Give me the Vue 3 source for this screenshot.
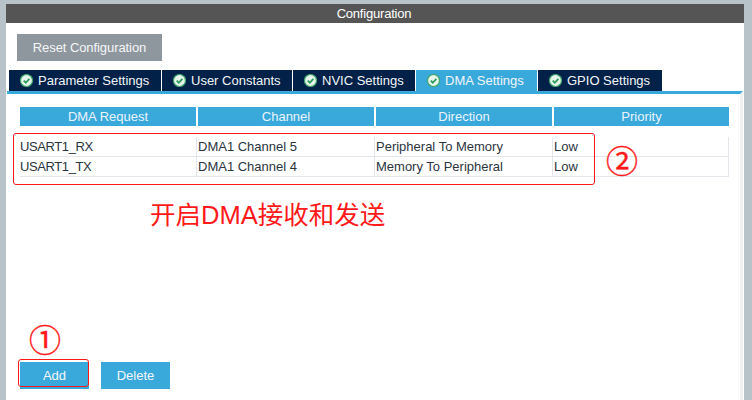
<script setup>
const tabs = [
  { name: 'Parameter Settings', w: 152 },
  { name: 'User Constants', w: 130 },
  { name: 'NVIC Settings', w: 122 },
  { name: 'DMA Settings', w: 121, active: true },
  { name: 'GPIO Settings', w: 124 }
]
const columns = ['DMA Request', 'Channel', 'Direction', 'Priority']
const rows = [
  ['USART1_RX', 'DMA1 Channel 5', 'Peripheral To Memory', 'Low'],
  ['USART1_TX', 'DMA1 Channel 4', 'Memory To Peripheral', 'Low']
]
</script>

<template>
  <div class="stage">
    <section class="panel">
      <header class="title">Configuration</header>
      <div class="toolbar">
        <button class="btn reset">Reset Configuration</button>
      </div>
      <nav class="tabs">
        <div
          v-for="t in tabs"
          :key="t.name"
          class="tab"
          :class="{ active: t.active }"
          :style="{ width: t.w + 'px' }"
        >
          <svg class="check" width="13" height="13" viewBox="0 0 13 13">
            <circle cx="6.5" cy="6.5" r="6" fill="#e8f5ec" stroke="#3fa66a" stroke-width="1.2" />
            <path d="M3.7 6.6 L5.8 8.7 L9.4 4.9" fill="none" stroke="#2f9e5f" stroke-width="1.8" />
          </svg>
          <span>{{ t.name }}</span>
        </div>
      </nav>
      <div class="body">
        <div class="thead">
          <div v-for="c in columns" :key="c" class="th">{{ c }}</div>
        </div>
        <div class="tbody">
          <div v-for="r in rows" :key="r[0]" class="tr">
            <div v-for="(v, i) in r" :key="i" class="td">{{ v }}</div>
          </div>
        </div>
        <div class="actions">
          <button class="btn blue">Add</button>
          <button class="btn blue">Delete</button>
        </div>
      </div>
    </section>

    <div class="mark box-table"></div>
    <div class="mark box-add"></div>
    <div class="note caption">开启DMA接收和发送</div>
    <div class="note num one">①</div>
    <div class="note num two">②</div>
  </div>
</template>

<style>
html, body { margin: 0; background: #b7c2c9; }
</style>

<style scoped>
.stage {
  position: relative;
  width: 752px;
  height: 400px;
  overflow: hidden;
  background: #b7c2c9;
  padding: 4px 8px 0 6px;
  box-sizing: border-box;
  font-family: "Liberation Sans", Arial, sans-serif;
}
.panel {
  height: 396px;
  background: #fff;
  display: flex;
  flex-direction: column;
}
.title {
  height: 19px;
  line-height: 19px;
  background: #545554;
  color: #fff;
  text-align: center;
  font-size: 13px;
  letter-spacing: -0.2px;
  padding-right: 2px;
}
.toolbar {
  padding: 11px 0 0 11px;
  height: 36px;
  box-sizing: content-box;
}
.btn {
  border: 0;
  padding: 0;
  margin: 0;
  color: #f4f6f8;
  font-family: inherit;
  font-size: 13px;
  display: block;
}
.reset {
  width: 145px;
  height: 27px;
  background: #8f979e;
  letter-spacing: -0.08px;
}
.tabs {
  display: flex;
  gap: 1px;
  padding-left: 3px;
  height: 21px;
}
.tab {
  box-sizing: border-box;
  background: #012148;
  color: #f2f5f8;
  font-size: 13px;
  display: flex;
  align-items: center;
  padding-left: 11px;
  gap: 5px;
  height: 21px;
}
.tab.active { background: #39a9db; }
.check { flex: none; }
.body {
  flex: 1;
  border-top: 3px solid #39a9db;
  margin-left: 1px;
  margin-right: 1px;
  padding: 13px 0 0 13px;
  position: relative;
  display: flex;
  flex-direction: column;
  border-right: 3px solid #f0f0f0;
}
.thead {
  display: grid;
  grid-template-columns: 176px 176px 176px 175px;
  column-gap: 2px;
  width: 709px;
}
.th {
  height: 19px;
  line-height: 19px;
  background: #39a9db;
  color: #eaf4fa;
  text-align: center;
  font-size: 13px;
}
.tbody {
  margin-top: 11px;
  width: 709px;
}
.tr {
  display: grid;
  grid-template-columns: 177px 178px 178px 176px;
  height: 20px;
  box-sizing: border-box;
  border-bottom: 1px solid #e3e6ea;
}
.td {
  font-size: 13px;
  line-height: 19px;
  color: #2c3540;
  padding-left: 1px;
  border-right: 1px solid #e3e6ea;
  box-sizing: border-box;
}
.td:first-child { padding-left: 0; letter-spacing: -0.4px; }
.actions {
  display: flex;
  gap: 12px;
  margin-top: 185px;
}
.blue {
  width: 69px;
  height: 27px;
  background: #39a9db;
}
.mark {
  position: absolute;
  box-sizing: border-box;
  border: 1px solid #ff1a1a;
  border-radius: 3px;
}
.box-table { left: 13px; top: 133px; width: 582px; height: 52px; }
.box-add { left: 18px; top: 359px; width: 71px; height: 28px; }
.note {
  position: absolute;
  color: #ff1a1a;
  font-family: "Liberation Sans", "Noto Sans CJK SC", sans-serif;
  white-space: nowrap;
}
.caption { left: 150px; top: 200px; font-size: 25.5px; line-height: 30px; }
.num {
  font-family: "Noto Sans CJK SC", sans-serif;
  font-size: 32px;
  line-height: 36px;
  -webkit-text-stroke: 0.4px #ff1a1a;
}
.one { left: 29px; top: 320px; }
.two { left: 606px; top: 141px; }
</style>
